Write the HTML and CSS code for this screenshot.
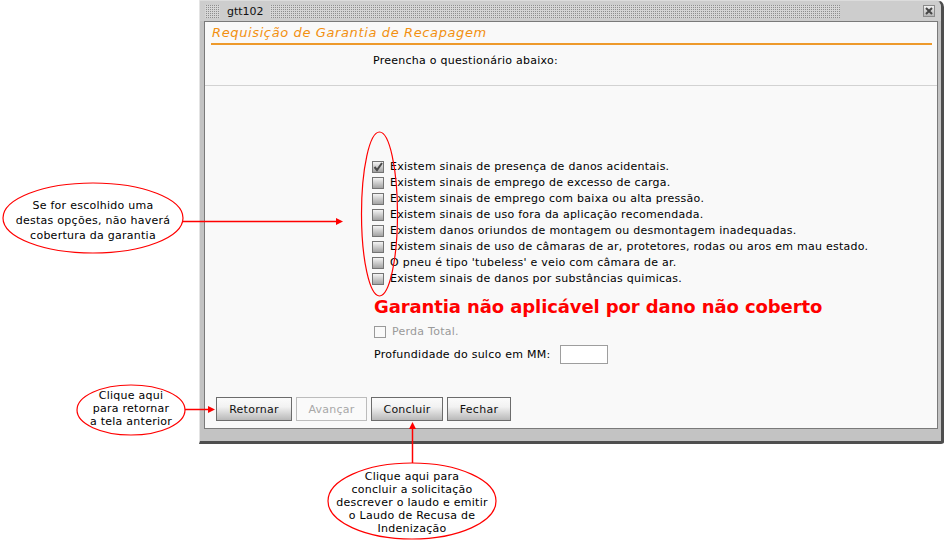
FILE: index.html
```html
<!DOCTYPE html>
<html lang="pt-BR">
<head>
<meta charset="utf-8">
<title>gtt102</title>
<link rel="stylesheet" href="styles.css">
</head>
<body>
<div class="stage">
  <div class="window">
    <div class="titlebar">
      <span class="grip grip-short"></span>
      <span class="title">gtt102</span>
      <span class="grip grip-long"></span>
      <span class="close">
        <svg width="10" height="10" viewBox="0 0 10 10"><path d="M2 2 L8 8 M8 2 L2 8" stroke="#444" stroke-width="2" fill="none"/></svg>
      </span>
    </div>
    <div class="panel">
      <div class="header">Requisição de Garantia de Recapagem</div>
      <div class="intro">Preencha o questionário abaixo:</div>
      <ul class="checklist">
        <li class="check-row"><span class="box"><svg width="10" height="10" viewBox="0 0 10 10"><path d="M1.5 5 L4 8 L9 1" stroke="#4a4a4a" stroke-width="2" fill="none"/></svg></span><span>Existem sinais de presença de danos acidentais.</span></li>
        <li class="check-row"><span class="box"></span><span>Existem sinais de emprego de excesso de carga.</span></li>
        <li class="check-row"><span class="box"></span><span>Existem sinais de emprego com baixa ou alta pressão.</span></li>
        <li class="check-row"><span class="box"></span><span>Existem sinais de uso fora da aplicação recomendada.</span></li>
        <li class="check-row"><span class="box"></span><span>Existem danos oriundos de montagem ou desmontagem inadequadas.</span></li>
        <li class="check-row"><span class="box"></span><span>Existem sinais de uso de câmaras de ar, protetores, rodas ou aros em mau estado.</span></li>
        <li class="check-row"><span class="box"></span><span>O pneu é tipo 'tubeless' e veio com câmara de ar.</span></li>
        <li class="check-row"><span class="box"></span><span>Existem sinais de danos por substâncias quimicas.</span></li>
      </ul>
      <div class="alert">Garantia não aplicável por dano não coberto</div>
      <div class="check-row check-disabled"><span class="box box-disabled"></span><span>Perda Total.</span></div>
      <div class="field-row"><span class="field-label">Profundidade do sulco em MM:</span><span class="field"></span></div>
      <div class="buttons">
        <span class="btn btn-back">Retornar</span>
        <span class="btn btn-next btn-disabled">Avançar</span>
        <span class="btn btn-done">Concluir</span>
        <span class="btn btn-close">Fechar</span>
      </div>
    </div>
  </div>

  <svg class="annotations" width="950" height="548" viewBox="0 0 950 548">
    <g fill="none" stroke="#ff0000" stroke-width="1.2">
      <ellipse cx="93" cy="218" rx="90" ry="35"/>
      <ellipse cx="379.5" cy="214" rx="18" ry="82"/>
      <ellipse cx="131" cy="410" rx="54" ry="25"/>
      <ellipse cx="412" cy="501" rx="84" ry="38"/>
    </g>
    <g stroke="#ff0000" stroke-width="1.5">
      <line x1="183" y1="221.5" x2="338" y2="221.5"/>
      <line x1="185" y1="409.5" x2="210" y2="409.5"/>
      <line x1="412.5" y1="463" x2="412.5" y2="427"/>
    </g>
    <g fill="#ff0000">
      <polygon points="343,221.5 336,218 336,225"/>
      <polygon points="215,409.5 208,406 208,413"/>
      <polygon points="412.5,422 409,429 416,429"/>
    </g>
  </svg>

  <div class="note note-options">Se for escolhido uma<br>destas opções, não haverá<br>cobertura da garantia</div>
  <div class="note note-back">Clique aqui<br>para retornar<br>a tela anterior</div>
  <div class="note note-done">Clique aqui para<br>concluir a solicitação<br>descrever o laudo e emitir<br>o Laudo de Recusa de<br>Indenização</div>
</div>
</body>
</html>
```

FILE: styles.css
```css
html, body {
  margin: 0;
  padding: 0;
  background: #ffffff;
}

body {
  font-family: "DejaVu Sans", Verdana, sans-serif;
  font-size: 11px;
  letter-spacing: 0.26px;
  color: #000;
}

.stage {
  position: relative;
  width: 950px;
  height: 548px;
  overflow: hidden;
}

/* ---------- window ---------- */
.window {
  box-sizing: border-box;
  width: 745px;
  height: 444px;
  margin-left: 199px;
  background: #c3c3c3;
  border-left: 1px solid #e4e4e4;
  border-top: 1px solid #dcdcdc;
  border-right: 3px solid #4e4e4e;
  border-bottom: 3px solid #4e4e4e;
  border-top-right-radius: 7px;
  border-bottom-right-radius: 3px;
  padding: 0 3px 12px 4px;
  display: flex;
  flex-direction: column;
}

.titlebar {
  height: 20px;
  display: flex;
  align-items: center;
  background: #cdcdcd;
  margin: 0 -3px 0 -4px;
  padding: 0 3px 0 5px;
  border-top-right-radius: 6px;
}

.grip {
  height: 13px;
  background-color: #d6d6d6;
  background-image: repeating-conic-gradient(#8e8e8e 0 25%, transparent 0 100%);
  background-size: 2px 2px;
}

.grip-short {
  width: 15px;
}

.grip-long {
  width: 570px;
}

.title {
  padding: 0 6px 0 7px;
  letter-spacing: 0;
  line-height: 13px;
  color: #111;
}

.close {
  box-sizing: border-box;
  width: 12px;
  height: 12px;
  margin-left: auto;
  margin-right: 3px;
  border: 1px solid #8a8a8a;
  background: linear-gradient(#f0f0f0, #b4b4b4);
  display: flex;
  align-items: center;
  justify-content: center;
}

.panel {
  box-sizing: border-box;
  height: 408px;
  background: #f9f9f9;
  border: 1px solid #7a7a7a;
  display: flex;
  flex-direction: column;
}

.header {
  height: 23px;
  box-sizing: border-box;
  margin: 0 5px 0 6px;
  padding-left: 1px;
  border-bottom: 2px solid #ee9a2c;
  font-size: 13px;
  font-style: italic;
  letter-spacing: 0.62px;
  line-height: 21px;
  color: #f29010;
}

.intro {
  height: 41px;
  box-sizing: border-box;
  padding: 9px 0 0 168px;
  line-height: 14px;
  border-bottom: 1px solid #d2d2d2;
}

.checklist {
  list-style: none;
  margin: 73px 0 0 0;
  padding: 0 0 0 167px;
}

.check-row {
  height: 16px;
  display: flex;
  align-items: center;
  gap: 6px;
  line-height: 14px;
}

.box {
  box-sizing: border-box;
  width: 12px;
  height: 12px;
  flex: none;
  border: 1px solid #747474;
  background: linear-gradient(#f4f4f4, #a2a2a2);
  display: flex;
  align-items: center;
  justify-content: center;
}

.alert {
  margin: 9px 0 0 169px;
  font-size: 18px;
  font-weight: bold;
  letter-spacing: -0.1px;
  line-height: 22px;
  color: #ff0000;
}

.check-disabled {
  margin: 6px 0 0 169px;
  color: #9a9a9a;
}

.box-disabled {
  border: 1px solid #9a9a9a;
  background: #fafafa;
}

.field-row {
  height: 20px;
  margin: 4px 0 0 169px;
  display: flex;
  align-items: center;
  gap: 10px;
}

.field {
  box-sizing: border-box;
  width: 48px;
  height: 19px;
  border: 1px solid #9e9e9e;
  background: #fff;
}

.buttons {
  margin: 33px 0 0 11px;
  display: flex;
  gap: 4px;
}

.btn {
  box-sizing: border-box;
  height: 24px;
  display: flex;
  align-items: center;
  justify-content: center;
  border: 1px solid #6c6c6c;
  background: linear-gradient(#fbfbfb, #f2f2f2 40%, #b9b9b9);
  color: #111;
}

.btn-back { width: 76px; }
.btn-next { width: 71px; }
.btn-done { width: 72px; }
.btn-close { width: 64px; }

.btn-disabled {
  border-color: #bcbcbc;
  background: #fafafa;
  color: #a8a8a8;
}

/* ---------- annotations ---------- */
.annotations {
  position: absolute;
  left: 0;
  top: 0;
  pointer-events: none;
}

.note {
  position: absolute;
  text-align: center;
  white-space: nowrap;
  color: #000;
}

.note-options {
  left: 3px;
  top: 198px;
  width: 180px;
  line-height: 15px;
}

.note-back {
  left: 76px;
  top: 389px;
  width: 110px;
  line-height: 13px;
}

.note-done {
  left: 328px;
  top: 470px;
  width: 168px;
  line-height: 13px;
}
```
